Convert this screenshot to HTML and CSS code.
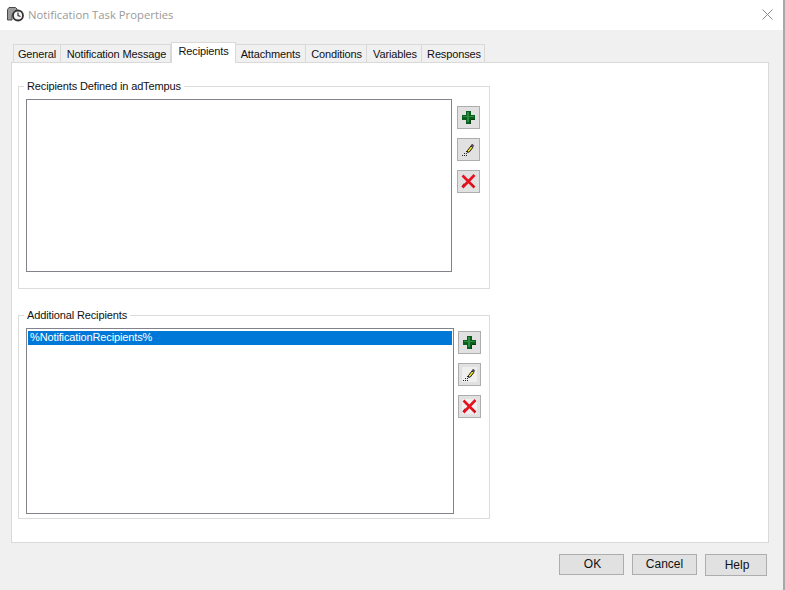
FILE: index.html
```html
<!DOCTYPE html>
<html lang="en">
<head>
<meta charset="utf-8">
<title>Notification Task Properties</title>
<link rel="stylesheet" href="styles.css">
</head>
<body>
<svg class="sprites" width="0" height="0" aria-hidden="true">
  <symbol id="plus" viewBox="0 0 15 15">
    <path d="M5 1h5v4h4v5h-4v4H5v-4H1V5h4z" fill="#0a5f1c"/>
    <path d="M6 2h2v4h5v1H8v5H6V7H2V6h4z" fill="#2b8c42"/>
    <path d="M10 9h4v1h-4zM9 10h1v4H9z" fill="#053d10"/>
  </symbol>
  <symbol id="edit" viewBox="0 0 15 15">
    <path d="M6.500 8.500l3.500-4.500 1.800 1.500-3.500 4.500-1.800.3z" fill="#f7e61a" stroke="#1c1c1c" stroke-width="1"/>
    <path d="M10 3.500l1-1.300 1.800 1.300-1 1.500z" fill="#6d4a72" stroke="#2a2a2a" stroke-width=".6"/>
    <path d="M1 13h1v1H1zM3 13h1v1H3zM5 13h1v1H5zM3 11h1v1H3zM5 11h1v1H5zM5 9h1v1H5z" fill="#222"/>
  </symbol>
  <symbol id="del" viewBox="0 0 15 15">
    <path d="M1.500 1.500l12 12M13.500 1l-12 12.500" stroke="#e6101f" stroke-width="2.600" fill="none"/>
    <path d="M3 9.500l-2 3M11 10l2 3" stroke="#a81220" stroke-width="1" fill="none"/>
  </symbol>
</svg>
<div class="window">
  <header class="titlebar">
    <svg class="app-icon" viewBox="0 0 17 17">
      <path d="M.5 13V2.500L2 .5h6.500L10 2v3H7L5 8v5z" fill="#9b9b9b" stroke="#4a4a4a"/>
      <circle cx="11" cy="8.500" r="5" fill="#f4f4f4" stroke="#333" stroke-width="1.800"/>
      <path d="M11 5.500v3l2.500 1" fill="none" stroke="#333" stroke-width="1.200"/>
    </svg>
    <span class="title">Notification Task Properties</span>
    <svg class="close" viewBox="0 0 11 11"><path d="M.5.500l10 10M10.500.500l-10 10" stroke="#8a8a8a" stroke-width="1" fill="none"/></svg>
  </header>
  <main class="content">
    <nav class="tabs">
      <span class="tab tab-general">General</span>
      <span class="tab tab-message">Notification Message</span>
      <span class="tab tab-active">Recipients</span>
      <span class="tab tab-attach">Attachments</span>
      <span class="tab tab-cond">Conditions</span>
      <span class="tab tab-vars">Variables</span>
      <span class="tab tab-resp">Responses</span>
    </nav>
    <section class="panel">
      <fieldset class="group group-defined">
        <legend>Recipients Defined in adTempus</legend>
        <div class="group-row">
          <div class="listbox listbox-defined"></div>
          <div class="tools tools-defined">
            <button class="tool"><svg class="glyph"><use href="#plus"/></svg></button>
            <button class="tool"><svg class="glyph"><use href="#edit"/></svg></button>
            <button class="tool"><svg class="glyph"><use href="#del"/></svg></button>
          </div>
        </div>
      </fieldset>
      <fieldset class="group group-additional">
        <legend>Additional Recipients</legend>
        <div class="group-row">
          <div class="listbox listbox-additional">
            <div class="item-selected">%NotificationRecipients%</div>
          </div>
          <div class="tools tools-additional">
            <button class="tool"><svg class="glyph"><use href="#plus"/></svg></button>
            <button class="tool"><svg class="glyph glyph-light"><use href="#edit"/></svg></button>
            <button class="tool"><svg class="glyph glyph-light"><use href="#del"/></svg></button>
          </div>
        </div>
      </fieldset>
    </section>
    <footer class="actions">
      <button class="action action-ok">OK</button>
      <button class="action">Cancel</button>
      <button class="action action-help">Help</button>
    </footer>
  </main>
</div>
</body>
</html>
```
FILE: styles.css
```css
* { box-sizing: border-box; }
html, body { margin: 0; padding: 0; }
body {
  width: 785px;
  height: 590px;
  overflow: hidden;
  font-family: "Liberation Sans", Arial, sans-serif;
  font-size: 11px;
  letter-spacing: -0.13px;
  color: #111;
}
.sprites { position: absolute; }
.window {
  width: 785px;
  height: 590px;
  background: #f0f0f0;
  border-right: 2px solid #a8a8a8;
}
.titlebar {
  height: 30px;
  background: #fff;
  display: flex;
  align-items: center;
  padding: 0 10px 0 7px;
}
.app-icon { width: 17px; height: 17px; margin-right: 4px; }
.title {
  flex: 1;
  font-family: "Open Sans", sans-serif;
  font-size: 11.300px;
  letter-spacing: 0;
  line-height: 15px;
  margin-top: -2px;
  color: #9a9a9a;
}
.close { width: 11px; height: 11px; margin-top: -2px; }
.content { padding: 14px 0 0 11px; }
.tabs {
  display: flex;
  height: 18px;
  padding-left: 2px;
  align-items: flex-start;
}
.tab {
  height: 18px;
  line-height: 18px;
  text-align: center;
  background: #f0f0f0;
  border: 1px solid #d9d9d9;
  border-bottom: 0;
  border-left: 0;
  white-space: nowrap;
}
.tab-general { width: 48px; border-left: 1px solid #d9d9d9; }
.tab-message { width: 110px; padding-left: 2px; }
.tab-active {
  width: 65px;
  height: 21px;
  margin-top: -2px;
  background: #fff;
  line-height: 17px;
  border-left: 1px solid #d9d9d9;
  position: relative;
  z-index: 1;
}
.tab-attach { width: 70px; }
.tab-cond { width: 61px; padding-left: 1px; }
.tab-vars { width: 55px; padding-left: 2px; }
.tab-resp { width: 63px; padding-left: 2px; }
.panel {
  width: 758px;
  height: 481px;
  background: #fff;
  border: 1px solid #d9d9d9;
  padding: 16px 0 0 6px;
}
.group {
  width: 472px;
  margin: 0;
  padding: 6px 0 0 7px;
  border: 1px solid #dcdcdc;
  min-width: 0;
}
.group legend {
  margin-left: -2px;
  padding: 0 3px;
  line-height: 14px;
  height: 14px;
}
.group-defined { height: 210px; }
.group-additional { height: 211px; margin-top: 19px; }
.group-row { display: flex; align-items: flex-start; }
.listbox {
  background: #fff;
  border: 1px solid #82828a;
  padding: 2px 1px 0;
}
.listbox-defined { width: 426px; height: 173px; }
.listbox-additional { width: 428px; height: 186px; }
.item-selected {
  height: 14px;
  line-height: 13px;
  padding-left: 2px;
  background: #0078d7;
  color: #fff;
}
.tools { display: flex; flex-direction: column; gap: 9px; }
.tools-defined { margin: 7px 0 0 5px; }
.tools-additional { margin: 3px 0 0 4px; }
.tool {
  width: 23px;
  height: 23px;
  padding: 0;
  background: #e1e1e1;
  border: 1px solid #adadad;
  display: flex;
  align-items: center;
  justify-content: center;
}
.glyph { width: 15px; height: 15px; }
.glyph-light { background: #efefef; }
.actions {
  display: flex;
  justify-content: flex-end;
  align-items: flex-start;
  gap: 8px;
  margin-top: 11px;
  padding-right: 16px;
}
.action {
  width: 65px;
  height: 21px;
  padding: 0 0 2px;
  background: #e1e1e1;
  border: 1px solid #adadad;
  font: inherit;
  font-size: 12px;
  letter-spacing: 0;
  color: #111;
}
.action-ok { padding-left: 2px; }
.action-help { width: 62px; height: 22px; padding-bottom: 0; padding-left: 2px; }
```
